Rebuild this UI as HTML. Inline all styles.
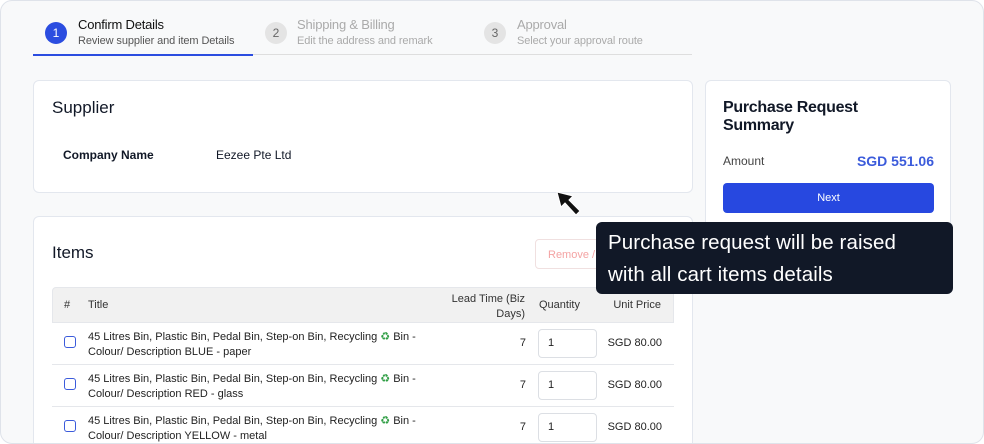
<!DOCTYPE html>
<html><head><meta charset="utf-8"><style>
*{box-sizing:border-box;margin:0;padding:0}
body{width:984px;height:444px;overflow:hidden;background:#fff;font-family:"Liberation Sans",sans-serif;color:#111827;position:relative}
.frame{position:absolute;left:0;top:0;width:984px;height:444px;border:1px solid #dfe3ea;border-radius:12px;background:#f8f9fa;overflow:hidden}
.in{position:absolute;left:-1px;top:-1px;width:984px;height:444px}
.abs{position:absolute}
.circ{position:absolute;width:22px;height:22px;border-radius:50%;font-size:12px;line-height:22px;text-align:center}
.st{position:absolute;font-size:13px;letter-spacing:-0.2px}
.ss{position:absolute;font-size:11px;letter-spacing:-0.1px}
.card{position:absolute;background:#fff;border:1px solid #e3e7ee;border-radius:6px}
.row{position:absolute;left:52px;width:622px;height:42px;border-top:1px solid #e5e7eb;background:#fff;font-size:11px;color:#222}
.cb{position:absolute;left:12px;top:13px;width:12px;height:12px;border:1.5px solid #3b5bdb;border-radius:3px}
.ttl{position:absolute;left:36px;top:7px;line-height:15px;width:330px}
.lt{position:absolute;right:148px;top:14px}
.qty{position:absolute;left:486px;top:6px;width:59px;height:29px;border:1px solid #dcdfe4;border-radius:4px;padding:7px 0 0 9px}
.up{position:absolute;right:12px;top:14px}
.rec{color:#2f9e44}
</style></head><body>
<div class="frame"><div class="in">
 <div class="circ" style="left:45px;top:22px;background:#2b4de0;color:#fff">1</div>
 <div class="st" style="left:78px;top:17px;color:#111">Confirm Details</div>
 <div class="ss" style="left:78px;top:35px;color:#555">Review supplier and item Details</div>
 <div class="circ" style="left:265px;top:22px;background:#e4e4e4;color:#666">2</div>
 <div class="st" style="left:297px;top:17px;color:#aaa">Shipping &amp; Billing</div>
 <div class="ss" style="left:297px;top:35px;color:#aaa">Edit the address and remark</div>
 <div class="circ" style="left:484px;top:22px;background:#e4e4e4;color:#666">3</div>
 <div class="st" style="left:517px;top:17px;color:#aaa">Approval</div>
 <div class="ss" style="left:517px;top:35px;color:#aaa">Select your approval route</div>
 <div class="abs" style="left:33px;top:54px;width:659px;height:1px;background:#dedede"></div>
 <div class="abs" style="left:33px;top:54px;width:220px;height:2px;background:#2b4de0"></div>

 <div class="card" style="left:33px;top:80px;width:660px;height:113px">
  <div class="abs" style="left:18px;top:17px;font-size:17px;font-weight:500">Supplier</div>
  <div class="abs" style="left:29px;top:67px;font-size:12px;font-weight:bold">Company Name</div>
  <div class="abs" style="left:182px;top:67px;font-size:12px">Eezee Pte Ltd</div>
 </div>

 <div class="card" style="left:33px;top:216px;width:660px;height:260px">
  <div class="abs" style="left:18px;top:26px;font-size:17px;font-weight:500">Items</div>
  <div class="abs" style="left:501px;top:22px;width:80px;height:30px;border:1px solid #f0e0e0;border-radius:4px;font-size:11px;color:#f4a3a3;padding:9px 0 0 12px">Remove /</div>
 </div>
 <div class="abs" style="left:52px;top:287px;width:622px;height:36px;background:#f1f1f1;border:1px solid #e5e7eb;border-radius:4px 4px 0 0;font-size:11px;color:#333">
  <span class="abs" style="left:11px;top:11px">#</span>
  <span class="abs" style="left:35px;top:11px">Title</span>
  <span class="abs" style="right:148px;top:4px;text-align:right;line-height:15px">Lead Time (Biz<br>Days)</span>
  <span class="abs" style="left:486px;top:11px">Quantity</span>
  <span class="abs" style="right:12px;top:11px">Unit Price</span>
 </div>
 <div class="row" style="top:322px"><div class="cb"></div><div class="ttl">45 Litres Bin, Plastic Bin, Pedal Bin, Step-on Bin, Recycling <span class="rec">♻</span> Bin - Colour/ Description BLUE - paper</div><div class="lt">7</div><div class="qty">1</div><div class="up">SGD 80.00</div></div>
 <div class="row" style="top:364px"><div class="cb"></div><div class="ttl">45 Litres Bin, Plastic Bin, Pedal Bin, Step-on Bin, Recycling <span class="rec">♻</span> Bin - Colour/ Description RED - glass</div><div class="lt">7</div><div class="qty">1</div><div class="up">SGD 80.00</div></div>
 <div class="row" style="top:406px"><div class="cb"></div><div class="ttl">45 Litres Bin, Plastic Bin, Pedal Bin, Step-on Bin, Recycling <span class="rec">♻</span> Bin - Colour/ Description YELLOW - metal</div><div class="lt">7</div><div class="qty">1</div><div class="up">SGD 80.00</div></div>

 <div class="card" style="left:705px;top:80px;width:246px;height:150px">
  <div class="abs" style="left:17px;top:18px;font-size:16px;font-weight:bold;line-height:18px;letter-spacing:-0.3px">Purchase Request<br>Summary</div>
  <div class="abs" style="left:17px;top:73px;font-size:12px;color:#444">Amount</div>
  <div class="abs" style="right:16px;top:72px;font-size:14px;font-weight:bold;color:#3b5bdb">SGD 551.06</div>
  <div class="abs" style="left:17px;top:102px;width:211px;height:30px;background:#2748e0;border-radius:4px;color:#fff;font-size:11px;text-align:center;line-height:30px">Next</div>
 </div>

 <svg class="abs" style="left:555px;top:190px" width="30" height="30" viewBox="0 0 30 30"><path d="M2 2 L6 17 L10 13 L21 25 L25 21 L14 10 L18 6 Z" fill="#111" stroke="#fff" stroke-width="1"/></svg>

 <div class="abs" style="left:596px;top:222px;width:357px;height:72px;background:#111827;border-radius:6px;color:#fff;font-size:20.5px;line-height:32px;padding:5px 0 0 12px;letter-spacing:0.1px">Purchase request will be raised<br>with all cart items details</div>
</div></div>
</body></html>
